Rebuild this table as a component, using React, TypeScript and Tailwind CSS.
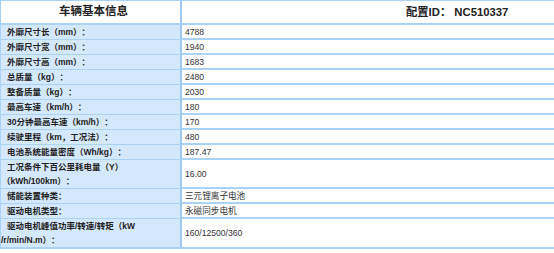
import React from "react";

type Row = { label: React.ReactNode; value: string; tall?: boolean };

const rows: Row[] = [
  { label: "外廓尺寸长（mm）：", value: "4788" },
  { label: "外廓尺寸宽（mm）：", value: "1940" },
  { label: "外廓尺寸高（mm）：", value: "1683" },
  { label: "总质量（kg）：", value: "2480" },
  { label: "整备质量（kg）：", value: "2030" },
  { label: "最高车速（km/h）：", value: "180" },
  { label: "30分钟最高车速（km/h）：", value: "170" },
  { label: "续驶里程（km，工况法）：", value: "480" },
  { label: "电池系统能量密度（Wh/kg）：", value: "187.47" },
  {
    label: (
      <>
        <div className="pl-[6px]">工况条件下百公里耗电量（Y）</div>
        <div className="pl-[1px]">（kWh/100km）：</div>
      </>
    ),
    value: "16.00",
    tall: true,
  },
  { label: "储能装置种类：", value: "三元锂离子电池" },
  { label: "驱动电机类型：", value: "永磁同步电机" },
  {
    label: (
      <>
        <div className="pl-[6px]">驱动电机峰值功率/转速/转矩（kW</div>
        <div className="pl-0">/r/min/N.m）：</div>
      </>
    ),
    value: "160/12500/360",
    tall: true,
  },
];

const font = {
  fontFamily: '"Liberation Sans", Arial, "Noto Sans CJK SC", sans-serif',
};

export default function App() {
  return (
    <div
      className="w-[554px] h-[253px] bg-white overflow-hidden [text-spacing-trim:space-all]"
      style={font}
    >
      <div className="w-[740px] border-l border-t border-[#a9d2f4] text-[#222]">
        <div className="grid grid-cols-[181px_1fr] h-[24px] border-b-2 border-[#a9d2f4]">
          <div className="border-r-2 border-[#9ccaf1] bg-white flex items-center justify-center font-bold text-[11.5px] pl-[6px]">
            车辆基本信息
          </div>
          <div className="flex items-center pl-[224px] font-bold text-[11.3px]">
            配置ID：&nbsp;NC510337
          </div>
        </div>
        {rows.map((r, i) => (
          <div
            key={i}
            className={`grid grid-cols-[181px_1fr] border-b-2 border-[#a9d2f4] ${
              r.tall ? (i === rows.length - 1 ? "h-[30px]" : "h-[29px]") : "h-[15px]"
            }`}
          >
            <div className="border-r-2 border-[#9ccaf1] bg-[#d3e8fb] flex flex-col justify-center font-bold text-[8.5px] leading-[14px]">
              {typeof r.label === "string" ? <div className="pl-[6px]">{r.label}</div> : r.label}
            </div>
            <div className="flex items-center pl-[3px] text-[8.6px] leading-[13px] text-[#333]">
              {r.value}
            </div>
          </div>
        ))}
      </div>
    </div>
  );
}
